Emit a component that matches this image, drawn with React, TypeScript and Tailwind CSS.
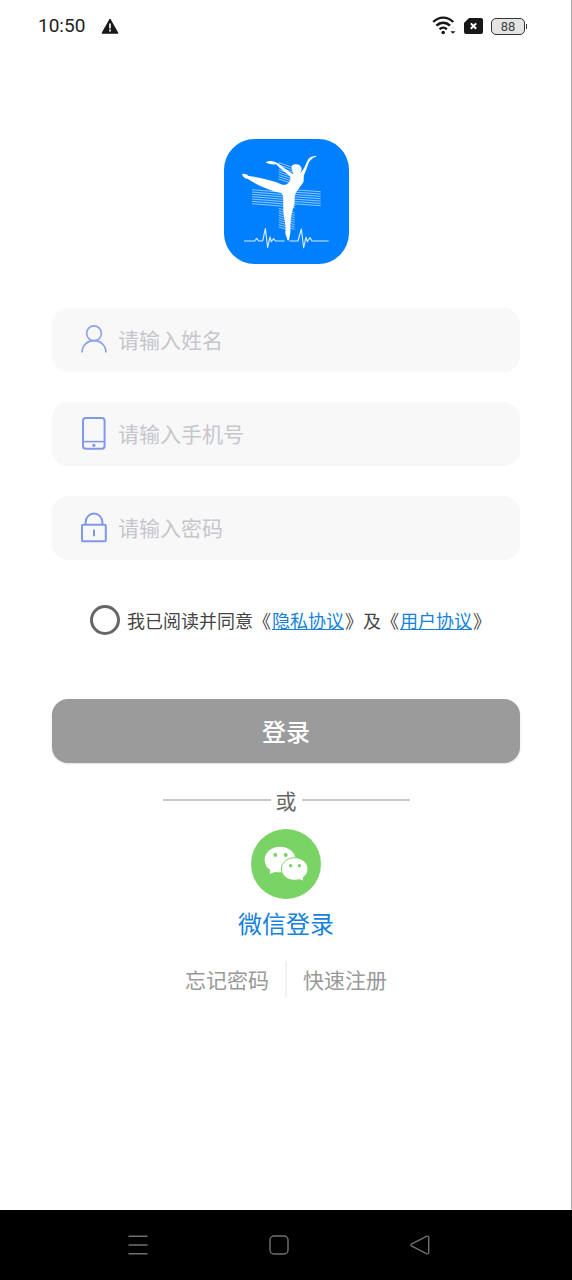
import type React from "react"

interface Field {
  id: string
  type: string
  placeholder: string
  icon: React.ReactNode
}

const fields: Field[] = [
  {
    id: "name",
    type: "text",
    placeholder: "请输入姓名",
    icon: (
      <svg viewBox="0 0 28 36" className="h-9 w-7" fill="none" stroke="#8ea4e6" strokeWidth="1.7">
        <circle cx="14" cy="11.3" r="7.4" />
        <path d="M2 30.4C2.2 23 7.500 18.700 14 18.700s11.800 4.300 12 11.700" />
      </svg>
    ),
  },
  {
    id: "phone",
    type: "tel",
    placeholder: "请输入手机号",
    icon: (
      <svg viewBox="0 0 28 36" className="h-9 w-7" fill="none" stroke="#8299e8" strokeWidth="2">
        <rect x="3" y="2" width="21.6" height="30.8" rx="2.8" />
        <path d="M3 25.6h21.6" strokeWidth="1.6" />
        <circle cx="13.9" cy="29.3" r="1.6" fill="#8299e8" stroke="none" />
      </svg>
    ),
  },
  {
    id: "password",
    type: "password",
    placeholder: "请输入密码",
    icon: (
      <svg viewBox="0 0 28 36" className="h-9 w-7" fill="none" stroke="#7f98e8" strokeWidth="2">
        <rect x="2" y="14.8" width="23.8" height="16.4" rx="1" />
        <path d="M5.6 14.800v-2.400a8.400 8.900 0 0 1 16.800 0v2.400M14 19.600v6.600" />
      </svg>
    ),
  },
]

const StatusBar: React.FC = () => (
  <header className="flex h-[52px] items-center justify-between pl-[38px] pr-11">
    <div className="flex items-center gap-4 text-[#222]">
      <span className="font-[Roboto,sans-serif] text-[19px] leading-6">10:50</span>
      <svg viewBox="0 0 18 16" className="h-4 w-[18px]">
        <path d="M9 1 17 15.2H1Z" fill="#181818" stroke="#181818" strokeWidth="1" strokeLinejoin="round" />
        <path d="M9 5.6v4.8M9 11.6v1.8" stroke="#fff" strokeWidth="1.7" />
      </svg>
    </div>
    <div className="flex items-center gap-2">
      <svg viewBox="0 0 24 20" className="h-5 w-6" fill="none" stroke="#181818" strokeWidth="2.4">
        <path d="M1.2 6C7 .2 15.400 .2 21.200 6M4.400 9.700c3.900-4 9.700-4 13.600 0M7.600 13.300c2.100-2.200 5.100-2.200 7.200 0" />
        <circle cx="11.200" cy="16.500" r="1.800" fill="#181818" stroke="none" />
        <path d="m18.400 15.300 2.500 2.500 2.500-2.500Z" fill="#181818" stroke="none" />
        <path d="m18.900 12.500 2-2 2 2Z" fill="#ddd" stroke="none" />
      </svg>
      <svg viewBox="0 0 19 16" className="h-4 w-[19px]">
        <path d="M5 0h12a2 2 0 0 1 2 2v12a2 2 0 0 1-2 2H2a2 2 0 0 1-2-2V5Z" fill="#181818" />
        <path d="m6.800 5.400 5.400 5.400m0-5.400-5.400 5.400" stroke="#fff" strokeWidth="2" />
      </svg>
      <div className="flex items-center gap-px">
        <div className="flex h-[17px] w-[34px] items-center justify-center rounded-[5px] border border-[#333] bg-[#e4e4e4] font-[Roboto,sans-serif] text-[13px] leading-none text-[#444]">
          88
        </div>
        <span className="h-[5px] w-px bg-[#333]" />
      </div>
    </div>
  </header>
)

const hatchLines = [0, 7, 14, 21, 28, 35, 42, 49]

const Logo: React.FC = () => (
  <svg viewBox="24 27 375 375" className="size-[125px]" role="img" aria-label="logo">
    <rect x="24" y="27" width="375" height="375" rx="92" fill="#0080ff" />
    {/* hatched cross behind the dancer */}
    <g stroke="#8ec6ff" strokeWidth="3" fill="none">
      {hatchLines.slice(0, 7).map((y) => (
        <path key={`l${y}`} d={`M108 ${y + 179}l98 8`} />
      ))}
      {hatchLines.slice(0, 7).map((y) => (
        <path key={`r${y}`} d={`M228 ${y + 179}l86 6`} />
      ))}
      {hatchLines.map((y) => (
        <path key={`t${y}`} d={`M188 ${y + 98}l48 16`} />
      ))}
      {hatchLines.map((y) => (
        <path key={`b${y}`} d={`M188 ${y + 235}l48 14`} />
      ))}
      <path d="M188 291l30 9M220 215l18 5M220 222l18 5M220 229l18 5" />
    </g>
    {/* heartbeat */}
    <path
      d="M84 333h32l6-8 6 8h12l8-37 7 56 7-31 4 14 7-9 5 7h28M220 333h26l10-36 7 56 7-31 4 13 8-12 6 10h50"
      fill="none"
      stroke="#d5eaff"
      strokeWidth="3.500"
      strokeLinejoin="round"
    />
    {/* dancer */}
    <g fill="#fff">
      <path d="M78 132c7-2 14 0 20 6 34 4 71 13 101 26 9 2 17-2 20-8 5-7 5-12 3-17-14-11-28-23-42-36-10 1-21 0-31-6 8-5 18-5 27-2 17 6 31 22 49 33 5 4 10 6 16 6 9-2 15-6 19-13 7-10 11-23 17-34 5-6 12-9 24-10l-2 4-10 3c2 2 0 3-4 5-9 8-12 27-20 44-2 8-2 14-2 21-3 9-10 14-15 22-8 9-12 18-12 28 1 20-6 33-10 53-3 17-3 34-3 50-1 8-2 16-4 24h-5c0-9-7-16-6-25 2-13-1-30-4-46-4-21-1-43-3-62-1-5-3-9-8-10-34-6-71-24-99-42-7 0-13-4-16-14Z" />
      <circle cx="242" cy="120" r="14" />
      <path d="M228 117c-4-8 2-14 10-14 7-2 15 2 17 8 3 4 2 9-1 12Z" />
      <path d="M232 125h19l-1 18h-17Z" />
    </g>
  </svg>
)

const WechatIcon: React.FC = () => (
  <svg viewBox="0 0 210 210" className="size-[70px]">
    <circle cx="105" cy="105" r="105" fill="#7ad465" />
    <path
      d="M87 53c-26 0-46 17-46 39 0 13 6 24 17 31l-2 12 17-7c5 2 9 2 14 2 26 0 47-16 47-38S113 53 87 53Z"
      fill="#fff"
    />
    <path
      d="M131 86c-22 0-40 15-40 34s18 34 40 34c5 0 10-1 14-2l14 5-3-11c9-6 15-15 15-26 0-19-18-34-40-34Z"
      fill="#fff"
      stroke="#7ad465"
      strokeWidth="3"
    />
    <g fill="#7ad465">
      <circle cx="73" cy="78" r="6" />
      <circle cx="104" cy="78" r="6" />
      <circle cx="119" cy="110" r="5" />
      <circle cx="145" cy="110" r="5" />
    </g>
  </svg>
)

const NavBar: React.FC = () => (
  <nav className="flex h-[70px] items-center justify-between bg-black pl-32 pr-[142px]">
    <button type="button" aria-label="菜单">
      <svg viewBox="0 0 20 20" className="size-5" stroke="#707070" strokeWidth="1.400">
        <path d="M.5 1.200h19M.5 10h19M.5 18.800h19" />
      </svg>
    </button>
    <button type="button" aria-label="主页">
      <svg viewBox="0 0 20 20" className="size-5" fill="none" stroke="#707070" strokeWidth="1.400">
        <rect x="1" y="1" width="18" height="18" rx="4" />
      </svg>
    </button>
    <button type="button" aria-label="返回">
      <svg viewBox="0 0 20 20" className="size-5" fill="none" stroke="#707070" strokeWidth="1.400">
        <path d="M1.800 8.900 16.500 1.300Q18.700.5 18.700 2.800v14.400q0 2.300-2.200 1.500L1.800 11.100q-1.600-1.100 0-2.200Z" />
      </svg>
    </button>
  </nav>
)

const App: React.FC = () => {
  return (
    <div className="flex min-h-screen flex-col bg-white font-['Noto_Sans_CJK_SC',sans-serif]">
      <div className="flex flex-1 flex-col border-r border-[#aaa]">
        <StatusBar />

        <main className="flex flex-col items-center pl-[52px] pr-[51px] pt-[87px]">
          <Logo />

          <form className="mt-11 flex w-full flex-col" onSubmit={(e) => e.preventDefault()}>
            <div className="flex flex-col gap-[30px]">
              {fields.map((field) => (
                <div key={field.id} className="flex h-16 items-center gap-[10px] rounded-2xl bg-[#f8f8f8] pl-7 pr-4">
                  <label htmlFor={field.id} aria-label={field.placeholder}>
                    {field.icon}
                  </label>
                  <input
                    id={field.id}
                    type={field.type}
                    placeholder={field.placeholder}
                    className="h-8 min-w-0 flex-1 bg-transparent pb-[2px] text-[21px] text-[#333] outline-none placeholder:text-[#c6c6cc]"
                  />
                </div>
              ))}
            </div>

            {/* Agreement */}
            <div className="mt-[45px] flex items-center gap-[7px] pl-[38px] text-lg leading-[30px] text-[#444]">
              <input
                id="agree"
                type="checkbox"
                className="size-[30px] shrink-0 appearance-none rounded-full border-[3px] border-[#666] checked:bg-[#0080ff]"
              />
              <label htmlFor="agree" className="whitespace-nowrap">
                我已阅读并同意《
                <a href="#privacy" className="mx-px text-[#1482dc] underline">隐私协议</a>
                》及《
                <a href="#terms" className="mx-px text-[#1482dc] underline">用户协议</a>
                》
              </label>
            </div>

            <button
              type="submit"
              className="mt-16 h-16 rounded-2xl bg-[#9b9b9b] text-2xl font-medium text-white shadow"
            >
              登录
            </button>
          </form>

          {/* Other ways in */}
          <div className="mt-[21px] flex items-center gap-[5px] text-[21px] leading-8 text-[#666]">
            <span className="h-[2px] w-[108px] bg-[#c8c8c8]" />
            或
            <span className="h-[2px] w-[108px] bg-[#c8c8c8]" />
          </div>

          <button type="button" className="mt-[13px] flex flex-col items-center gap-2 text-2xl leading-8 text-[#1482dc]">
            <WechatIcon />
            微信登录
          </button>

          <div className="mt-[22px] flex items-center gap-4 text-[21px] leading-9 text-[#999]">
            <a href="#forgot">忘记密码</a>
            <span className="h-9 w-[2px] bg-[#f2f2f2]" />
            <a href="#register">快速注册</a>
          </div>
        </main>
      </div>

      <NavBar />
    </div>
  )
}

export default App
